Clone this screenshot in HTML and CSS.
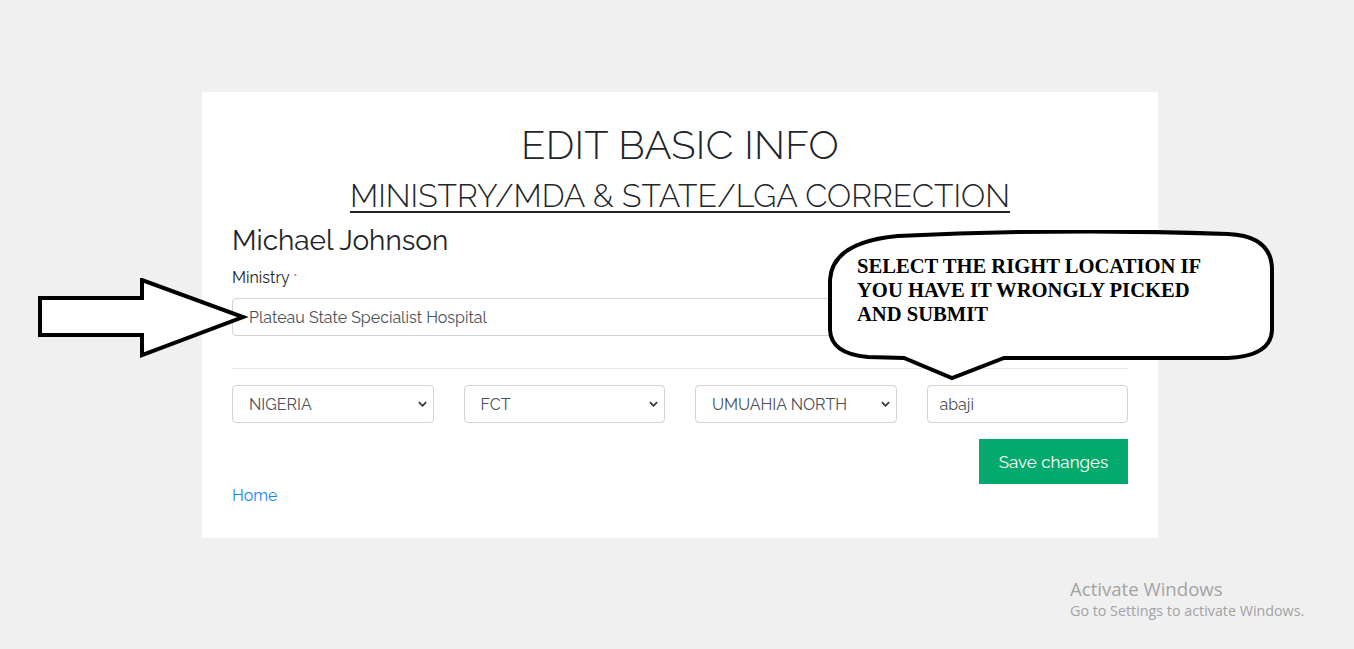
FILE: index.html
```html
<!DOCTYPE html>
<html lang="en">
<head>
<meta charset="utf-8">
<title>Edit Basic Info</title>
<link rel="stylesheet" href="styles.css">
</head>
<body>
<main class="card">
  <h1 class="title">EDIT BASIC INFO</h1>
  <h2 class="subtitle">MINISTRY/MDA &amp; STATE/LGA CORRECTION</h2>
  <h3 class="name">Michael Johnson</h3>
  <form class="form">
    <label class="label" for="ministry">Ministry <span class="req">*</span></label>
    <div class="select-wrap">
      <select id="ministry" class="control">
        <option>Plateau State Specialist Hospital</option>
      </select>
      <svg class="chev" viewBox="0 0 10 6" width="9" height="6"><path d="M1 1l4 4 4-4" fill="none" stroke="#343a40" stroke-width="2"/></svg>
    </div>
    <hr class="rule">
    <div class="row">
      <div class="select-wrap">
        <select class="control"><option>NIGERIA</option></select>
        <svg class="chev" viewBox="0 0 10 6" width="9" height="6"><path d="M1 1l4 4 4-4" fill="none" stroke="#343a40" stroke-width="2"/></svg>
      </div>
      <div class="select-wrap">
        <select class="control"><option>FCT</option></select>
        <svg class="chev" viewBox="0 0 10 6" width="9" height="6"><path d="M1 1l4 4 4-4" fill="none" stroke="#343a40" stroke-width="2"/></svg>
      </div>
      <div class="select-wrap">
        <select class="control"><option>UMUAHIA NORTH</option></select>
        <svg class="chev" viewBox="0 0 10 6" width="9" height="6"><path d="M1 1l4 4 4-4" fill="none" stroke="#343a40" stroke-width="2"/></svg>
      </div>
      <input class="control input" type="text" value="abaji">
    </div>
    <div class="actions">
      <button type="button" class="btn">Save changes</button>
    </div>
    <a class="home" href="#">Home</a>
  </form>
</main>

<svg class="arrow" width="260" height="100" viewBox="0 0 260 100">
  <polygon points="40,20 142,20 142,2 243,39 142,77 142,57 40,57" fill="#fff" stroke="#000" stroke-width="4" stroke-linejoin="miter"/>
</svg>

<div class="callout">
  <svg class="callout-shape" width="460" height="160" viewBox="0 0 460 160">
    <path d="M70 6 Q 240 -2 400 4 Q 444 6 444 40 L 444 100 Q 443 126 400 128 L 176 128 L 124 148 L 76 128 L 40 127 Q 3 124 2 100 L 2 50 Q 4 12 70 6 Z" fill="#fff" stroke="#000" stroke-width="4"/>
  </svg>
  <p class="callout-text">SELECT THE RIGHT LOCATION IF<br>YOU HAVE IT WRONGLY PICKED<br>AND SUBMIT</p>
</div>

<div class="watermark">
  <div class="wm-title">Activate Windows</div>
  <div class="wm-sub">Go to Settings to activate Windows.</div>
</div>
</body>
</html>
```
FILE: styles.css
```css
* { box-sizing: border-box; }
html, body { margin: 0; }
body {
  background: #f0f0f0;
  font-family: Raleway, Lato, "Open Sans", sans-serif;
  color: #212529;
  position: relative;
  width: 1354px;
  height: 649px;
  overflow: hidden;
}
.card {
  width: 956px;
  margin: 92px 0 0 202px;
  background: #fff;
  padding: 29px 30px 30px;
}
.title {
  margin: 0;
  text-align: center;
  font-size: 40px;
  font-weight: 300;
  line-height: 48px;
  letter-spacing: 0.3px;
}
.subtitle {
  margin: 8px 0 0;
  text-align: center;
  font-size: 32px;
  font-weight: 300;
  line-height: 38px;
  text-decoration: underline;
  text-decoration-thickness: 2px;
  text-underline-offset: 4px;
  letter-spacing: 0.05px;
}
.name {
  margin: 9px 0 0;
  font-size: 28px;
  font-weight: 400;
  line-height: 34px;
}
.form { display: flex; flex-direction: column; }
.label {
  margin-top: 8px;
  font-size: 16px;
  line-height: 24px;
  margin-bottom: 8px;
}
.req { color: #dc3545; font-size: 12px; vertical-align: top; }
.select-wrap { position: relative; }
.control {
  display: block;
  width: 100%;
  height: 38px;
  border: 1px solid #ced4da;
  border-radius: 4px;
  background: #fff;
  color: #495057;
  font-family: inherit;
  font-size: 16px;
  padding: 0 30px 0 16px;
  appearance: none;
  -webkit-appearance: none;
  outline: none;
}
.chev {
  position: absolute;
  right: 7px;
  top: 16px;
  pointer-events: none;
}
.rule {
  border: 0;
  border-top: 1px solid #e6e6e6;
  margin: 32px 0 16px;
  width: 100%;
}
.row {
  display: grid;
  grid-template-columns: repeat(4, 1fr);
  column-gap: 30px;
}
.input { padding-left: 12px; }
.actions {
  display: flex;
  justify-content: flex-end;
  margin-top: 16px;
}
.btn {
  height: 45px;
  width: 149px;
  border: 0;
  background: #04a96d;
  color: #fff;
  font-family: inherit;
  font-size: 17px;
  padding: 0;
}
.home {
  color: #1a86f5;
  text-decoration: none;
  font-size: 16px;
  line-height: 24px;
  margin-top: 0;
  align-self: flex-start;
}
.arrow {
  position: absolute;
  left: 0;
  top: 278px;
}
.callout {
  position: absolute;
  left: 828px;
  top: 230px;
  width: 460px;
  height: 160px;
}
.callout-shape { position: absolute; left: 0; top: 0; }
.callout-text {
  position: relative;
  margin: 0;
  padding: 24px 0 0 29px;
  font-family: "Liberation Serif", "Times New Roman", serif;
  font-weight: bold;
  font-size: 20.6px;
  line-height: 24px;
  color: #000;
}
.watermark {
  position: absolute;
  left: 1070px;
  top: 577px;
  font-family: "Open Sans", "Noto Sans", sans-serif;
  color: #a3a3a3;
}
.wm-title { font-size: 18.6px; line-height: 24px; }
.wm-sub { font-size: 14.3px; line-height: 20px; }
```
